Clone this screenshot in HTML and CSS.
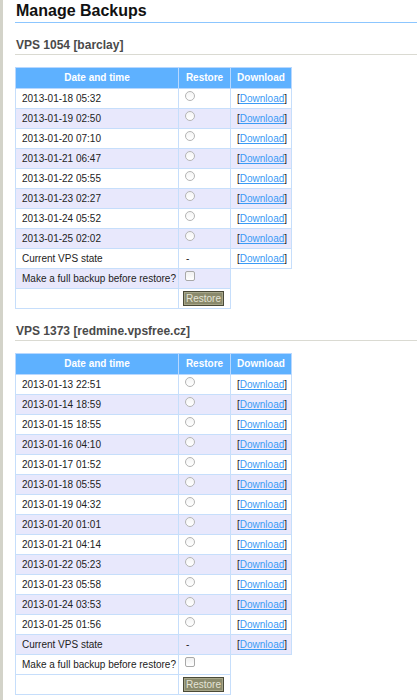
FILE: index.html
```html
<!DOCTYPE html>
<html>
<head>
<meta charset="utf-8">
<title>Manage Backups</title>
<link rel="stylesheet" href="styles.css">
</head>
<body>
<div class="page">
  <h1 class="title">Manage Backups</h1>

  <h2 class="vps">VPS 1054 [barclay]</h2>
  <table class="backups">
    <colgroup><col class="c-date"><col class="c-restore"><col class="c-dl"></colgroup>
    <thead>
      <tr><th>Date and time</th><th>Restore</th><th>Download</th></tr>
    </thead>
    <tbody>
      <tr><td>2013-01-18 05:32</td><td class="r"><input type="radio" name="a"></td><td class="d">[<a href="#">Download</a>]</td></tr>
      <tr class="alt"><td>2013-01-19 02:50</td><td class="r"><input type="radio" name="a"></td><td class="d">[<a href="#">Download</a>]</td></tr>
      <tr><td>2013-01-20 07:10</td><td class="r"><input type="radio" name="a"></td><td class="d">[<a href="#">Download</a>]</td></tr>
      <tr class="alt"><td>2013-01-21 06:47</td><td class="r"><input type="radio" name="a"></td><td class="d">[<a href="#">Download</a>]</td></tr>
      <tr><td>2013-01-22 05:55</td><td class="r"><input type="radio" name="a"></td><td class="d">[<a href="#">Download</a>]</td></tr>
      <tr class="alt"><td>2013-01-23 02:27</td><td class="r"><input type="radio" name="a"></td><td class="d">[<a href="#">Download</a>]</td></tr>
      <tr><td>2013-01-24 05:52</td><td class="r"><input type="radio" name="a"></td><td class="d">[<a href="#">Download</a>]</td></tr>
      <tr class="alt"><td>2013-01-25 02:02</td><td class="r"><input type="radio" name="a"></td><td class="d">[<a href="#">Download</a>]</td></tr>
      <tr><td>Current VPS state</td><td class="dash">-</td><td class="d">[<a href="#">Download</a>]</td></tr>
      <tr class="alt"><td>Make a full backup before restore?</td><td class="r"><input type="checkbox"></td></tr>
      <tr><td></td><td class="b"><button type="button" class="btn">Restore</button></td></tr>
    </tbody>
  </table>

  <h2 class="vps">VPS 1373 [redmine.vpsfree.cz]</h2>
  <table class="backups">
    <colgroup><col class="c-date"><col class="c-restore"><col class="c-dl"></colgroup>
    <thead>
      <tr><th>Date and time</th><th>Restore</th><th>Download</th></tr>
    </thead>
    <tbody>
      <tr><td>2013-01-13 22:51</td><td class="r"><input type="radio" name="b"></td><td class="d">[<a href="#">Download</a>]</td></tr>
      <tr class="alt"><td>2013-01-14 18:59</td><td class="r"><input type="radio" name="b"></td><td class="d">[<a href="#">Download</a>]</td></tr>
      <tr><td>2013-01-15 18:55</td><td class="r"><input type="radio" name="b"></td><td class="d">[<a href="#">Download</a>]</td></tr>
      <tr class="alt"><td>2013-01-16 04:10</td><td class="r"><input type="radio" name="b"></td><td class="d">[<a href="#">Download</a>]</td></tr>
      <tr><td>2013-01-17 01:52</td><td class="r"><input type="radio" name="b"></td><td class="d">[<a href="#">Download</a>]</td></tr>
      <tr class="alt"><td>2013-01-18 05:55</td><td class="r"><input type="radio" name="b"></td><td class="d">[<a href="#">Download</a>]</td></tr>
      <tr><td>2013-01-19 04:32</td><td class="r"><input type="radio" name="b"></td><td class="d">[<a href="#">Download</a>]</td></tr>
      <tr class="alt"><td>2013-01-20 01:01</td><td class="r"><input type="radio" name="b"></td><td class="d">[<a href="#">Download</a>]</td></tr>
      <tr><td>2013-01-21 04:14</td><td class="r"><input type="radio" name="b"></td><td class="d">[<a href="#">Download</a>]</td></tr>
      <tr class="alt"><td>2013-01-22 05:23</td><td class="r"><input type="radio" name="b"></td><td class="d">[<a href="#">Download</a>]</td></tr>
      <tr><td>2013-01-23 05:58</td><td class="r"><input type="radio" name="b"></td><td class="d">[<a href="#">Download</a>]</td></tr>
      <tr class="alt"><td>2013-01-24 03:53</td><td class="r"><input type="radio" name="b"></td><td class="d">[<a href="#">Download</a>]</td></tr>
      <tr><td>2013-01-25 01:56</td><td class="r"><input type="radio" name="b"></td><td class="d">[<a href="#">Download</a>]</td></tr>
      <tr class="alt"><td>Current VPS state</td><td class="dash">-</td><td class="d">[<a href="#">Download</a>]</td></tr>
      <tr><td>Make a full backup before restore?</td><td class="r"><input type="checkbox"></td></tr>
      <tr><td></td><td class="b"><button type="button" class="btn">Restore</button></td></tr>
    </tbody>
  </table>
</div>
</body>
</html>
```

FILE: styles.css
```css
html, body {
  margin: 0;
  padding: 0;
  background: #ffffff;
}

body {
  font-family: "Liberation Sans", Arial, sans-serif;
  color: #222222;
}

.page {
  border-left: 3px solid #d3d3c9;
  padding: 0 0 20px 12px;
  min-height: 700px;
  box-sizing: border-box;
}

.title {
  margin: 0;
  padding: 1px 0 1px 1px;
  font-size: 16px;
  line-height: 20px;
  font-weight: bold;
  color: #111111;
  border-bottom: 1px solid #8cc6ff;
}

.vps {
  margin: 14px 0 12px 0;
  padding: 0 0 1px 1px;
  font-size: 12px;
  line-height: 16px;
  font-weight: bold;
  color: #4a4a4a;
  border-bottom: 1px solid #dadad2;
}

.backups {
  border-collapse: collapse;
  table-layout: fixed;
  width: 276px;
  font-size: 10px;
  line-height: 12px;
}

.c-date { width: 163px; }
.c-restore { width: 52px; }
.c-dl { width: 61px; }

.backups th {
  background: #5eb1ff;
  color: #ffffff;
  font-weight: bold;
  text-align: center;
  height: 20px;
  padding: 0;
  border: 1px solid #b8d8ff;
  vertical-align: middle;
}

.backups td {
  height: 19px;
  padding: 0 0 0 6px;
  border: 1px solid #c6defb;
  vertical-align: middle;
  white-space: nowrap;
  background: #ffffff;
}

.backups tr.alt td {
  background: #e8e8fc;
}

.backups td.r {
  vertical-align: top;
}

.backups td.dash {
  padding-left: 7px;
}

.backups td.b {
  padding-left: 4px;
  vertical-align: top;
}

.backups td.d a {
  color: #3a9af5;
  text-decoration: underline;
}

.backups input[type="radio"] {
  -webkit-appearance: none;
  appearance: none;
  display: block;
  width: 10px;
  height: 10px;
  margin: 2px 0 0 0;
  border: 1px solid #b4b4b4;
  border-radius: 50%;
  background: linear-gradient(#f4f4f4, #ffffff);
  box-sizing: border-box;
}

.backups input[type="checkbox"] {
  -webkit-appearance: none;
  appearance: none;
  display: block;
  width: 10px;
  height: 10px;
  margin: 2px 0 0 0;
  border: 1px solid #a8a8a8;
  border-radius: 2px;
  background: linear-gradient(#f0f0f0, #ffffff);
  box-sizing: border-box;
}

.btn {
  display: block;
  width: 41px;
  height: 15px;
  margin: 2px 0 0 0;
  padding: 0;
  font-family: "Liberation Sans", Arial, sans-serif;
  font-size: 10px;
  line-height: 11px;
  color: #e4e4d6;
  background: #8a8a6c;
  border: 1px solid #4a4a38;
  box-shadow: inset 0 0 0 1px #a6a68a;
  border-radius: 0;
  box-sizing: border-box;
}
```
